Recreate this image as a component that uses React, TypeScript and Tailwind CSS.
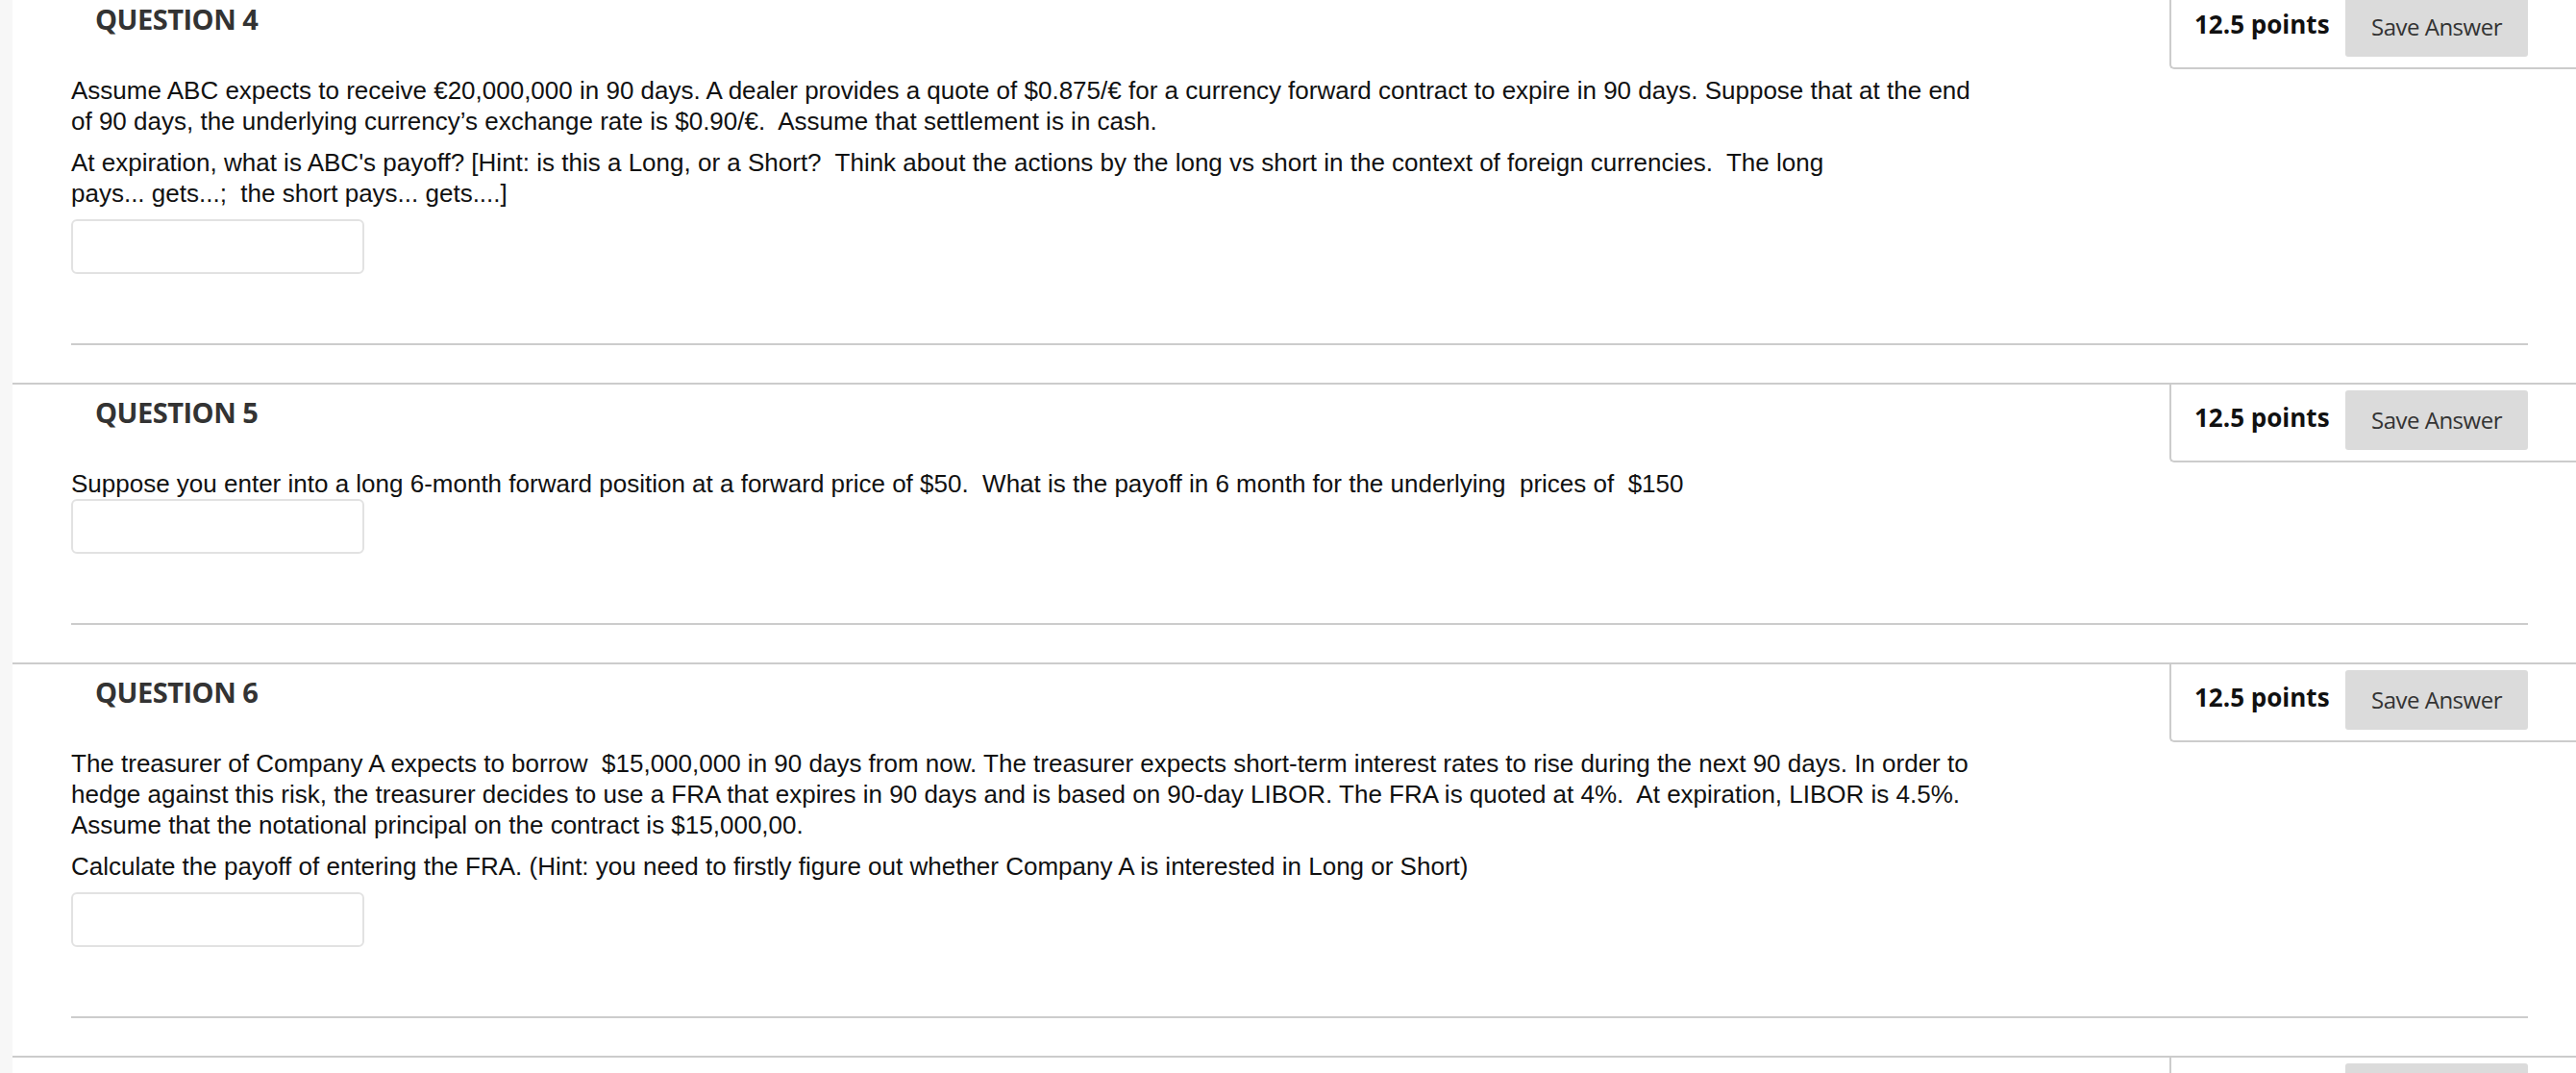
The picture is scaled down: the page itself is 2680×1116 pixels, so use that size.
import { ReactNode } from "react";

const body = "font-['Liberation_Sans',Arial,sans-serif] text-[26px] leading-[32px] text-[#111] whitespace-nowrap";

function PointsBox({ empty = false }: { empty?: boolean }) {
    return (
        <div className="flex items-start w-[423px] h-[81px] shrink-0 pt-[6px] pl-[24px] pr-[50px] border-l-2 border-b-2 border-[#cccccc] rounded-bl-[5px] font-['Open_Sans',sans-serif]">
            {!empty && (
                <span className="mt-[10px] text-[26px] leading-[36px] font-bold text-[#111] whitespace-nowrap">12.5 points</span>
            )}
            <button
                aria-label="Save Answer"
                className="ml-auto w-[190px] h-[62px] rounded-[3px] bg-[#dbdbdb] text-[#333] text-[24px] tracking-[-0.5px] whitespace-nowrap cursor-pointer"
            >
                {!empty && "Save Answer"}
            </button>
        </div>
    );
}

function Question({ number, children }: { number: number; children: ReactNode }) {
    return (
        <section className="border-t-2 border-[#cccccc]">
            <div className="flex items-start justify-between">
                <h2 className="pl-[86px] pt-[9px] font-['Open_Sans',sans-serif] font-bold text-[29px] leading-[40px] tracking-[-0.5px] text-[#333] whitespace-nowrap">
                    QUESTION {number}
                </h2>
                <PointsBox />
            </div>
            <div className="pl-[61px] pr-[50px] pt-[6px] pb-[39px]">
                {children}
                <input
                    type="text"
                    aria-label={`Answer for question ${number}`}
                    className="block w-[305px] h-[57px] border-2 border-[#e2e2e2] rounded-[6px] bg-white"
                />
                <div className="mt-[72px] border-t-2 border-[#cccccc]" />
            </div>
        </section>
    );
}

export default function App() {
    return (
        <div className="flex h-[1116px] overflow-hidden bg-white">
            <div className="w-[13px] shrink-0 bg-[#f7f7f7]" />
            <main className="flex-1 -mt-[11px]">
                <Question number={4}>
                    <p className={`${body} mb-[11px]`}>
                        Assume ABC expects to receive €20,000,000 in 90 days. A dealer provides a quote of $0.875/€ for a currency forward contract to expire in 90 days. Suppose that at the end
                        <br />
                        of 90 days, the underlying currency’s exchange rate is $0.90/€.&nbsp; Assume that settlement is in cash.
                    </p>
                    <p className={`${body} mb-[11px]`}>
                        At expiration, what is ABC's payoff? [Hint: is this a Long, or a Short?&nbsp; Think about the actions by the long vs short in the context of foreign currencies.&nbsp; The long
                        <br />
                        pays... gets...;&nbsp; the short pays... gets....]
                    </p>
                </Question>
                <Question number={5}>
                    <div className={body}>
                        Suppose you enter into a long 6-month forward position at a forward price of $50.&nbsp; What is the payoff in 6 month for the underlying&nbsp; prices of&nbsp; $150
                    </div>
                </Question>
                <Question number={6}>
                    <p className={`${body} mb-[11px]`}>
                        The treasurer of Company A expects to borrow&nbsp; $15,000,000 in 90 days from now. The treasurer expects short-term interest rates to rise during the next 90 days. In order to
                        <br />
                        hedge against this risk, the treasurer decides to use a FRA that expires in 90 days and is based on 90-day LIBOR. The FRA is quoted at 4%.&nbsp; At expiration, LIBOR is 4.5%.
                        <br />
                        Assume that the notational principal on the contract is $15,000,00.
                    </p>
                    <p className={`${body} mb-[11px]`}>
                        Calculate the payoff of entering the FRA. (Hint: you need to firstly figure out whether Company A is interested in Long or Short)
                    </p>
                </Question>
                <section className="border-t-2 border-[#cccccc]">
                    <div className="flex justify-end">
                        <PointsBox empty />
                    </div>
                </section>
            </main>
        </div>
    );
}
